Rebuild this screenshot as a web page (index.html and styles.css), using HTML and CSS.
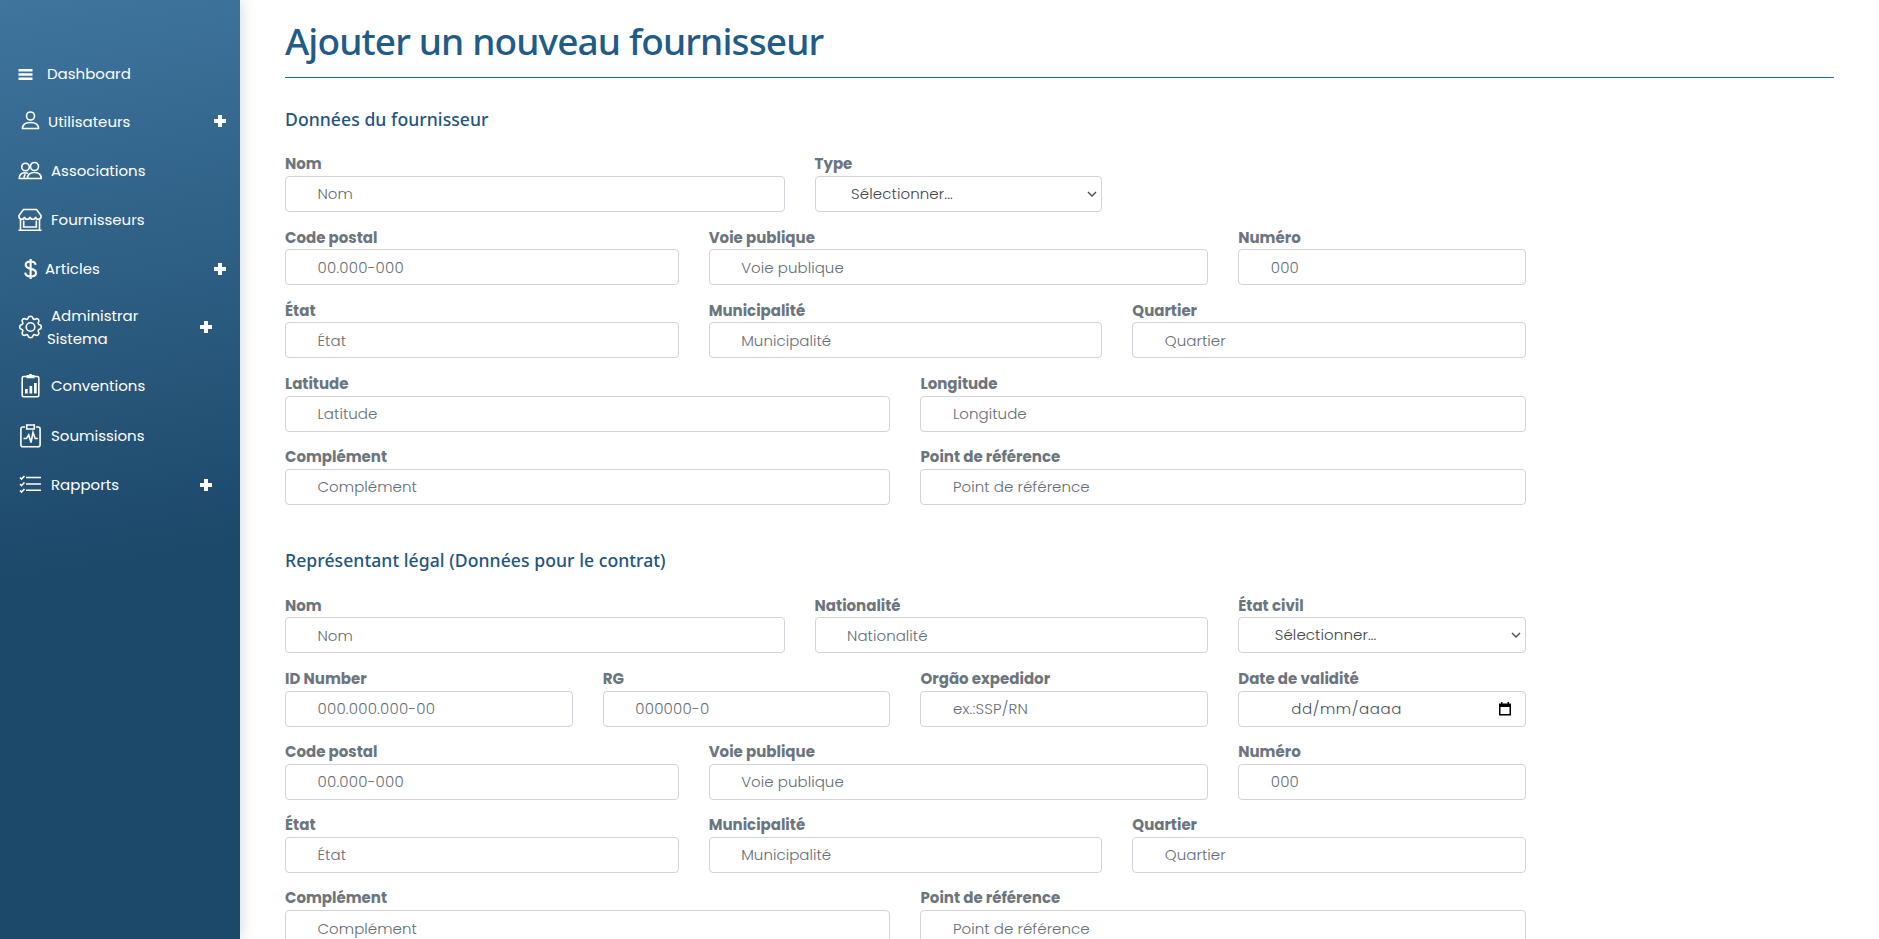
FILE: index.html
```html
<!DOCTYPE html>
<html lang="fr">
<head>
<meta charset="utf-8">
<title>Ajouter un nouveau fournisseur</title>
<link rel="stylesheet" href="styles.css">
</head>
<body>
<aside class="sidebar">
  <nav class="menu">
    <a class="item dashboard"><svg class="icon" viewBox="0 0 24 24"><path class="solid" d="M.5 7h14v2.600H.5zM.5 11.200h14v2.600H.5zM.5 15.400h14V18H.5z"/></svg><span class="text">Dashboard</span></a>
    <a class="item users"><svg class="icon" viewBox="0 0 24 24"><circle cx="12.500" cy="7" r="4"/><path d="M4.500 19.500c0-4 3-6 8-6s8 2 8 6z"/></svg><span class="text">Utilisateurs</span><i class="plus"></i></a>
    <a class="item"><svg class="icon" viewBox="0 0 24 24"><circle cx="7.500" cy="8" r="3.800"/><circle cx="16.500" cy="7.500" r="4"/><path d="M9.500 19.500c0-4 2.500-6 7-6s6.700 2 6.700 6zM9 19.500H1.300c0-3.500 1.700-5.600 5.200-5.800 1.500 0 2.500.2 3.500.7M6 19.500c0-2 .4-3.200 1.300-4.200"/></svg><span class="text">Associations</span></a>
    <a class="item"><svg class="icon" viewBox="0 0 24 24"><path d="M5.500 1.500h13l4.500 6v1.500a2.800 2.800 0 0 1-5.500 0 2.800 2.800 0 0 1-5.500 0 2.800 2.800 0 0 1-5.500 0A2.800 2.800 0 0 1 1 9V7.500zM2.500 12v10M21.500 12v10M.5 22.300h23M5.700 12.500v6.500h12.600v-6.500"/></svg><span class="text">Fournisseurs</span></a>
    <a class="item articles"><svg class="icon" viewBox="0 0 24 24"><path class="heavy" d="M17.700 7.800C17.200 5.500 15.500 4.500 12.500 4.500c-3 0-4.800 1.500-4.800 3.600 0 5.300 10.300 2.200 10.300 7.600 0 2.400-2 3.800-5.200 3.800-3.300 0-5.300-1.400-5.600-3.900M12.600 2v20"/></svg><span class="text">Articles</span><i class="plus"></i></a>
    <a class="item tall"><svg class="icon" viewBox="0 0 24 24"><circle cx="12.500" cy="12" r="4.300"/><path d="M12.500 1.200c1.900 0 2 .7 2.300 1.700.4 1.400 1.400 1.800 2.600 1.100 1-.5 1.700-.8 2.800.3s.8 1.800.3 2.800c-.7 1.200-.3 2.200 1.100 2.600 1 .3 1.700.4 1.700 2.300s-.7 2-1.700 2.300c-1.400.4-1.800 1.400-1.100 2.600.5 1 .8 1.700-.3 2.800s-1.800.8-2.800.3c-1.200-.7-2.200-.3-2.600 1.100-.3 1-.4 1.700-2.300 1.700s-2-.7-2.300-1.700c-.4-1.400-1.400-1.800-2.600-1.100-1 .5-1.700.8-2.800-.3s-.8-1.800-.3-2.800c.7-1.200.3-2.200-1.100-2.600-1-.3-1.700-.4-1.700-2.300s.7-2 1.700-2.300c1.400-.4 1.800-1.400 1.100-2.600-.5-1-.8-1.700.3-2.800s1.800-.8 2.800-.3c1.200.7 2.200.3 2.600-1.100.3-1 .4-1.700 2.300-1.700z"/></svg><span class="text">Administrar<br>Sistema</span><i class="plus"></i></a>
    <a class="item"><svg class="icon" viewBox="0 0 24 24"><rect x="4.200" y="2.500" width="16.600" height="20.200" rx="1.500"/><path class="solid" d="M8.500 1H11a1.500 1.500 0 0 1 3 0h2.500v3.200h-8zM7 15h2.700v4.500H7zM11.500 12h2.700v7.500h-2.700zM16 9h2.700v10.500H16z"/></svg><span class="text">Conventions</span></a>
    <a class="item bids"><svg class="icon" viewBox="0 0 24 24"><path d="M7 3H4.700A2 2 0 0 0 2.900 5v15.700a2 2 0 0 0 2 2h15.200a2 2 0 0 0 2-2V5a2 2 0 0 0-2-2H18M8.700 1h7.600v4H8.700zM5.500 14.500h3l2.200-3.500 2.300 7.500 2-10 2.200 6h2.600"/></svg><span class="text">Soumissions</span></a>
    <a class="item reports"><svg class="icon" viewBox="0 0 24 24"><path d="M8 4.500h15M8 11h15M8 17.300h15M2 4.500 3.500 6l3-3M2 11l1.500 1.500 3-3M2 17.500 3.500 19l3-3"/></svg><span class="text">Rapports</span><i class="plus"></i></a>
  </nav>
</aside>
<main class="content">
  <h1 class="title">Ajouter un nouveau fournisseur</h1>
  <section class="section">
    <h2 class="subtitle">Données du fournisseur</h2>
    <div class="fields">
      <label class="field c5"><b class="label">Nom</b><input class="control" placeholder="Nom"></label>
      <label class="field c3"><b class="label">Type</b><span class="control select">Sélectionner...<svg class="chevron" viewBox="0 0 10 6"><path d="M1 1l4 4 4-4"/></svg></span></label>
      <label class="field c4 first"><b class="label">Code postal</b><input class="control digits" placeholder="00.000-000"></label>
      <label class="field c5"><b class="label">Voie publique</b><input class="control" placeholder="Voie publique"></label>
      <label class="field c3"><b class="label">Numéro</b><input class="control digits" placeholder="000"></label>
      <label class="field c4"><b class="label">État</b><input class="control" placeholder="État"></label>
      <label class="field c4"><b class="label">Municipalité</b><input class="control" placeholder="Municipalité"></label>
      <label class="field c4"><b class="label">Quartier</b><input class="control" placeholder="Quartier"></label>
      <label class="field c6"><b class="label">Latitude</b><input class="control" placeholder="Latitude"></label>
      <label class="field c6"><b class="label">Longitude</b><input class="control" placeholder="Longitude"></label>
      <label class="field c6"><b class="label">Complément</b><input class="control" placeholder="Complément"></label>
      <label class="field c6"><b class="label">Point de référence</b><input class="control" placeholder="Point de référence"></label>
    </div>
  </section>
  <section class="section">
    <h2 class="subtitle">Représentant légal (Données pour le contrat)</h2>
    <div class="fields">
      <label class="field c5"><b class="label">Nom</b><input class="control" placeholder="Nom"></label>
      <label class="field c4"><b class="label">Nationalité</b><input class="control" placeholder="Nationalité"></label>
      <label class="field c3"><b class="label">État civil</b><span class="control select">Sélectionner...<svg class="chevron" viewBox="0 0 10 6"><path d="M1 1l4 4 4-4"/></svg></span></label>
      <label class="field c3"><b class="label">ID Number</b><input class="control digits" placeholder="000.000.000-00"></label>
      <label class="field c3"><b class="label">RG</b><input class="control digits" placeholder="000000-0"></label>
      <label class="field c3"><b class="label">Orgão expedidor</b><input class="control digits" placeholder="ex.:SSP/RN"></label>
      <label class="field c3"><b class="label">Date de validité</b><span class="control date">dd/mm/aaaa<svg class="calendar" viewBox="0 0 14 14"><path d="M3 0h1.500v1.500h5V0H11v1.500h2V13.500H1V1.500h2zM2.500 5v7h9V5z" fill-rule="evenodd"/></svg></span></label>
      <label class="field c4"><b class="label">Code postal</b><input class="control digits" placeholder="00.000-000"></label>
      <label class="field c5"><b class="label">Voie publique</b><input class="control" placeholder="Voie publique"></label>
      <label class="field c3"><b class="label">Numéro</b><input class="control digits" placeholder="000"></label>
      <label class="field c4"><b class="label">État</b><input class="control" placeholder="État"></label>
      <label class="field c4"><b class="label">Municipalité</b><input class="control" placeholder="Municipalité"></label>
      <label class="field c4"><b class="label">Quartier</b><input class="control" placeholder="Quartier"></label>
      <label class="field c6"><b class="label">Complément</b><input class="control" placeholder="Complément"></label>
      <label class="field c6"><b class="label">Point de référence</b><input class="control" placeholder="Point de référence"></label>
    </div>
  </section>
</main>
</body>
</html>
```
FILE: styles.css
```css
* { box-sizing: border-box; }
body {
  margin: 0;
  height: 939px;
  display: flex;
  overflow: hidden;
  background: #fff;
  font-family: Poppins, Inter, sans-serif;
  font-size: 15px;
}
.sidebar {
  flex: none;
  width: 240px;
  height: 939px;
  padding-top: 53px;
  background: linear-gradient(170deg, #3f759e 0%, #1c4869 60%, #1c4869 100%);
  box-shadow: 0 0 15px rgba(0, 0, 0, .18);
}
.menu { display: flex; flex-direction: column; }
.item {
  display: flex;
  align-items: center;
  height: 49px;
  padding: 0 20px 0 18px;
  color: #fff;
  line-height: 23px;
}
.icon {
  flex: none;
  width: 24px;
  height: 24px;
  margin-right: 9px;
  fill: none;
  stroke: #fff;
  stroke-width: 1.6;
}
.icon .solid { fill: #fff; stroke: none; }
.icon .heavy { stroke-width: 2.1; }
.dashboard { height: 41px; }
.dashboard .icon { margin-right: 5px; }
.users { height: 52px; padding-top: 2px; }
.users .icon { margin-right: 6px; }
.users .plus, .articles .plus { margin-right: -6px; }
.articles .icon { margin-right: 3px; }
.tall { height: 68px; }
.tall .text { text-indent: 4px; margin-left: -4px; }
.bids { height: 50px; padding-top: 1px; }
.plus {
  width: 12px;
  height: 12px;
  margin-left: auto;
  margin-right: 8px;
  background:
    linear-gradient(#fff, #fff) center / 12px 4px no-repeat,
    linear-gradient(#fff, #fff) center / 4px 12px no-repeat;
}
.content { flex: 1; padding: 14px 45px 0; }
.title {
  margin: 0;
  height: 64px;
  border-bottom: 1px solid #0b6bd0;
  color: #215b87;
  font: 500 37px/53px "Segoe UI", "Noto Sans", sans-serif;
  letter-spacing: -.87px;
  white-space: nowrap;
}
.subtitle {
  margin: 0;
  height: 32px;
  color: #1f557f;
  font: 500 17.600px/32px "Segoe UI", "Noto Sans", sans-serif;
  letter-spacing: .05px;
}
.section { padding-top: 25px; }
.section + .section { padding-top: 39.600px; }
.fields {
  display: grid;
  grid-template-columns: repeat(12, 1fr);
  column-gap: 30px;
  row-gap: 12.600px;
  width: 1241px;
  padding-top: 16.400px;
}
.field { display: flex; flex-direction: column; min-width: 0; }
.c3 { grid-column-end: span 3; }
.c4 { grid-column-end: span 4; }
.c5 { grid-column-end: span 5; }
.c6 { grid-column-end: span 6; }
.first { grid-column-start: 1; }
.label { height: 24.600px; color: #6c757d; font-weight: 700; line-height: 25px; }
.control {
  display: flex;
  align-items: center;
  width: 100%;
  height: 36px;
  padding: 0 4px 0 31.500px;
  border: 1px solid #ced4da;
  border-radius: 4px;
  background: #fff;
  color: #495057;
  font: 300 15px/24px Poppins, Inter, sans-serif;
  letter-spacing: .05px;
}
.control::placeholder { color: #646d75; opacity: 1; }
.digits { letter-spacing: .2px; }
.select { padding-left: 35.500px; color: #3d444b; letter-spacing: .1px; }
.chevron {
  width: 10px;
  height: 6px;
  margin-left: auto;
  fill: none;
  stroke: #555;
  stroke-width: 1.5;
}
.date { padding: 0 13px 0 52px; letter-spacing: .6px; }
.calendar { width: 14px; height: 14px; margin-left: auto; }
```
